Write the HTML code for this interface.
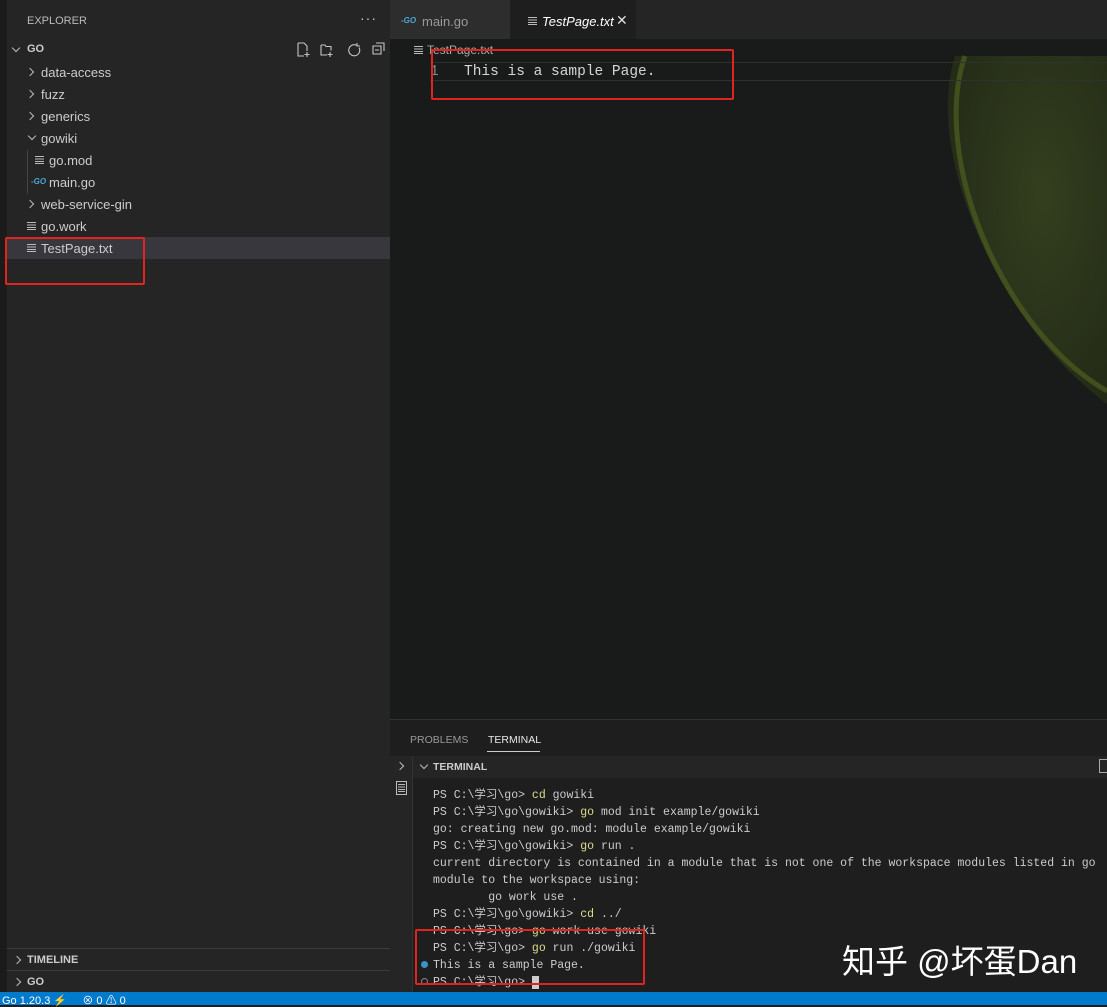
<!DOCTYPE html>
<html><head><meta charset="utf-8"><style>
*{margin:0;padding:0;box-sizing:border-box}
body{width:1107px;height:1005px;overflow:hidden;background:#1e1e1e;font-family:"Liberation Sans","Noto Sans CJK SC",sans-serif;position:relative;color:#ccc}
.abs{position:absolute}
.side{left:0;top:0;width:390px;height:992px;background:#252526}
.strip{left:0;top:0;width:7px;height:992px;background:#1b1b1c}
.row{position:absolute;left:7px;width:383px;height:22px;font-size:13px;line-height:22px;color:#ccc}
.row span{top:1px}
.chev{position:absolute;width:6px;height:6px;border-right:1.3px solid #bbb;border-bottom:1.3px solid #bbb}
.lines{position:absolute;width:9px;height:8px;background:repeating-linear-gradient(#bbb 0 1px,transparent 1px 2.4px)}
.red{position:absolute;border:2px solid #e02420;border-radius:2px}
.term{font-family:"Liberation Mono","Noto Sans CJK SC",monospace;font-size:11.5px;line-height:17px;color:#ccc;white-space:pre}
.y{color:#dcdc8b}
</style></head><body>
<div class="abs side"></div>
<div class="abs strip"></div>
<div class="abs" style="left:27px;top:15px;font-size:11px;color:#bbb">EXPLORER</div>
<div class="abs" style="left:360px;top:10px;font-size:14px;color:#ccc;letter-spacing:1px">···</div>
<div class="chev" style="left:13px;top:45px;transform:rotate(45deg)"></div>
<div class="abs" style="left:27px;top:43px;font-size:11px;font-weight:bold;color:#ccc">GO</div>
<svg class="abs" style="left:296px;top:42px" width="90" height="16" fill="none" stroke="#c5c5c5" stroke-width="1.1">
<path d="M2 1h6l3 3v5M2 1v13h6M11 10v5M8.5 12.5h5"/>
<path d="M25 3h4l1 1.5h5v4M25 3v10h6M34 10v5M31.5 12.5h5"/>
<path d="M61 3.5a5.5 5.5 0 1 0 2 2M61 1v3h3"/>
<path d="M77 4h8v8h-8zM80 1h8v8M79 8h4"/>
</svg>
<div class="row" style="top:61px"><div class="chev" style="left:20px;top:8px;transform:rotate(-45deg)"></div><span style="position:absolute;left:34px">data-access</span></div>
<div class="row" style="top:83px"><div class="chev" style="left:20px;top:8px;transform:rotate(-45deg)"></div><span style="position:absolute;left:34px">fuzz</span></div>
<div class="row" style="top:105px"><div class="chev" style="left:20px;top:8px;transform:rotate(-45deg)"></div><span style="position:absolute;left:34px">generics</span></div>
<div class="row" style="top:127px"><div class="chev" style="left:22px;top:6px;transform:rotate(45deg)"></div><span style="position:absolute;left:34px">gowiki</span></div>
<div class="abs" style="left:27px;top:150px;width:1px;height:44px;background:#444"></div>
<div class="row" style="top:149px"><div class="lines" style="left:28px;top:7px"></div><span style="position:absolute;left:42px">go.mod</span></div>
<div class="row" style="top:171px"><span style="position:absolute;left:24px;top:7px;font-size:8px;line-height:8px;font-weight:bold;font-style:italic;color:#4aa6d6">-GO</span><span style="position:absolute;left:42px">main.go</span></div>
<div class="row" style="top:193px"><div class="chev" style="left:20px;top:8px;transform:rotate(-45deg)"></div><span style="position:absolute;left:34px">web-service-gin</span></div>
<div class="row" style="top:215px"><div class="lines" style="left:20px;top:7px"></div><span style="position:absolute;left:34px">go.work</span></div>
<div class="row" style="top:237px;background:#37373d"><div class="lines" style="left:20px;top:7px"></div><span style="position:absolute;left:34px">TestPage.txt</span></div>
<div class="red" style="left:5px;top:237px;width:140px;height:48px"></div>
<div class="abs" style="left:7px;top:948px;width:383px;height:1px;background:#3c3c3c"></div>
<div class="abs" style="left:7px;top:970px;width:383px;height:1px;background:#3c3c3c"></div>
<div class="chev" style="left:14px;top:957px;transform:rotate(-45deg)"></div>
<div class="abs" style="left:27px;top:954px;font-size:11px;font-weight:bold">TIMELINE</div>
<div class="chev" style="left:14px;top:979px;transform:rotate(-45deg)"></div>
<div class="abs" style="left:27px;top:976px;font-size:11px;font-weight:bold">GO</div>

<!-- editor -->
<div class="abs" style="left:390px;top:0;width:717px;height:39px;background:#252526"></div>
<div class="abs" style="left:390px;top:0;width:120px;height:39px;background:#2d2d2d"></div>
<div class="abs" style="left:401px;top:16px;font-size:8px;font-weight:bold;font-style:italic;color:#4aa6d6">-GO</div>
<div class="abs" style="left:422px;top:14px;font-size:13px;color:#999">main.go</div>
<div class="abs" style="left:510px;top:0;width:126px;height:39px;background:#1e1e1e"></div>
<div class="lines" style="left:528px;top:17px"></div>
<div class="abs" style="left:542px;top:14px;font-size:13px;font-style:italic;color:#fff">TestPage.txt</div>
<div class="abs" style="left:616px;top:12px;font-size:14px;color:#ddd">✕</div>
<div class="abs" style="left:390px;top:39px;width:717px;height:680px;background:#191b1a;overflow:hidden">
<svg width="717" height="680" style="position:absolute;left:0;top:0">
<defs><radialGradient id="g" cx="0.6" cy="0.4" r="0.7"><stop offset="0" stop-color="#333f1e"/><stop offset="1" stop-color="#232a17"/></radialGradient></defs>
<path d="M565 17 C552 60 555 120 590 200 C620 270 670 330 717 365 L717 17Z" fill="url(#g)"/>
<path d="M575 17 C560 60 562 130 598 210 C628 275 670 325 717 352" fill="none" stroke="#46561f" stroke-width="5" opacity="0.85"/>
</svg>
</div>
<div class="lines" style="left:414px;top:46px"></div>
<div class="abs" style="left:427px;top:43px;font-size:12px;color:#aaa">TestPage.txt</div>
<div class="abs" style="left:430px;top:62px;width:677px;height:19px;border-top:1px solid #2c322c;border-bottom:1px solid #2c322c"></div>
<div class="abs term" style="left:430px;top:63px;font-size:14.5px;color:#888;line-height:18px">1</div>
<div class="abs term" style="left:464px;top:63px;font-size:14.5px;color:#d4d4d4;line-height:18px">This is a sample Page.</div>
<div class="red" style="left:431px;top:49px;width:303px;height:51px"></div>

<!-- panel -->
<div class="abs" style="left:390px;top:719px;width:717px;height:273px;background:#1e1e1e;border-top:1px solid #333"></div>
<div class="abs" style="left:410px;top:734px;font-size:10.5px;color:#999">PROBLEMS</div>
<div class="abs" style="left:488px;top:734px;font-size:10.5px;color:#e7e7e7">TERMINAL</div>
<div class="abs" style="left:487px;top:751px;width:53px;height:1px;background:#ccc"></div>
<div class="abs" style="left:390px;top:756px;width:717px;height:22px;background:#252526"></div>
<div class="abs" style="left:390px;top:756px;width:23px;height:236px;background:#252526;border-right:1px solid #333"></div>
<div class="chev" style="left:397px;top:763px;transform:rotate(-45deg)"></div>
<div class="chev" style="left:421px;top:762px;transform:rotate(45deg)"></div>
<div class="abs" style="left:433px;top:761px;font-size:10.5px;font-weight:bold;color:#ccc">TERMINAL</div>
<div class="abs" style="left:396px;top:781px;width:11px;height:14px;border:1px solid #bbb"></div>
<div class="lines" style="left:398px;top:784px;width:7px"></div>
<div class="abs" style="left:1099px;top:759px;width:10px;height:14px;border:1px solid #aaa"></div>
<div class="abs term" style="left:433px;top:787px">PS C:\学习\go> <span class="y">cd</span> gowiki
PS C:\学习\go\gowiki> <span class="y">go</span> mod init example/gowiki
go: creating new go.mod: module example/gowiki
PS C:\学习\go\gowiki> <span class="y">go</span> run .
current directory is contained in a module that is not one of the workspace modules listed in go
module to the workspace using:
        go work use .
PS C:\学习\go\gowiki> <span class="y">cd</span> ../
PS C:\学习\go> <span class="y">go</span> work use gowiki
PS C:\学习\go> <span class="y">go</span> run ./gowiki
This is a sample Page.
PS C:\学习\go> <span style="background:#ccc">&nbsp;</span></div>
<div class="abs" style="left:421px;top:961px;width:7px;height:7px;border-radius:50%;background:#3794c8"></div>
<div class="abs" style="left:421px;top:978px;width:7px;height:7px;border-radius:50%;border:1px solid #888"></div>
<div class="red" style="left:415px;top:929px;width:230px;height:56px"></div>
<div class="abs" style="left:842px;top:935px;font-size:33px;color:#fff;font-family:'Liberation Sans','Noto Sans CJK SC',sans-serif">知乎 @坏蛋Dan</div>

<div class="abs" style="left:0;top:992px;width:1107px;height:13px;background:#007acc"></div>
<div class="abs" style="left:2px;top:995px;font-size:11px;color:#fff;line-height:12px">Go 1.20.3 ⚡&nbsp;&nbsp;&nbsp;&nbsp;&nbsp;⊗ 0 ⚠ 0</div>
</body></html>
